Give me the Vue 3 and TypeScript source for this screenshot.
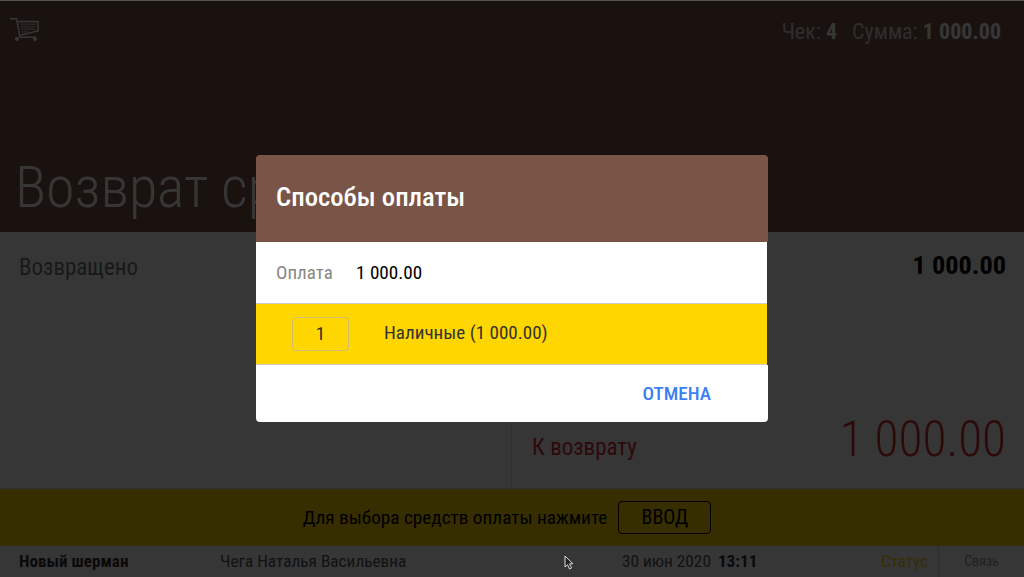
<script setup lang="ts">
const payments = [{ key: 1, label: "Наличные (1 000.00)" }];
</script>

<template>
  <div class="screen">
    <header class="top">
      <div class="top-bar">
        <svg class="cart" width="30" height="24" viewBox="0 0 30 24">
          <path d="M0 .8h6.500l3.500 18.400h16" fill="none" stroke="#fff" stroke-width="1.500" />
          <path d="M8 3.500h20v9.500l-17 4" fill="none" stroke="#fff" stroke-width="1.500" />
          <path d="M10 5.500h16v1.500h-16zM10.500 8h15v1.500h-15zM11 10.500h14v1.500h-14zM11.500 13h7v1.500h-7z" fill="#fff" opacity=".5" />
          <circle cx="7" cy="21" r="2" fill="#fff" />
          <circle cx="25" cy="21" r="2" fill="#fff" />
        </svg>
        <div class="totals">
          <span>Чек: <b>4</b></span>
          <span>Сумма: <b>1 000.00</b></span>
        </div>
      </div>
      <h1 class="title">Возврат средств</h1>
    </header>

    <main class="content">
      <section class="col col-left">
        <div class="returned">Возвращено</div>
      </section>
      <section class="col col-right">
        <div class="sum-top">1 000.00</div>
        <div class="refund">
          <span class="refund-label">К возврату</span>
          <span class="refund-sum">1 000.00</span>
        </div>
      </section>
    </main>

    <div class="prompt">
      <span>Для выбора средств оплаты нажмите</span>
      <span class="key">ВВОД</span>
    </div>

    <footer class="status">
      <b class="shift">Новый шерман</b>
      <span class="cashier">Чега Наталья Васильевна</span>
      <span class="date">30 июн 2020 <b>13:11</b></span>
      <span class="state">Статус</span>
      <span class="link">Связь</span>
    </footer>

    <div class="overlay">
      <div class="dialog">
        <div class="dialog-head">Способы оплаты</div>
        <div class="dialog-sum">
          <span class="sum-label">Оплата</span>
          <span class="sum-value">1 000.00</span>
        </div>
        <div v-for="p in payments" :key="p.key" class="pay-row">
          <span class="pay-key">{{ p.key }}</span>
          <span class="pay-name">{{ p.label }}</span>
        </div>
        <div class="dialog-foot">
          <span class="cancel">ОТМЕНА</span>
        </div>
      </div>
    </div>

    <svg class="pointer" width="12" height="16" viewBox="0 0 12 16">
      <path d="M1 1v11l2.500-2.300 2 4.300 2-1-2-4.200h3.500z" fill="#222" stroke="#ddd" stroke-width="1" />
    </svg>
  </div>
</template>

<style>
html,
body {
  margin: 0;
  background: #000;
}
</style>

<style scoped>
.screen {
  position: relative;
  width: 1024px;
  height: 577px;
  overflow: hidden;
  display: flex;
  flex-direction: column;
  background: #fff;
  font-family: Roboto, "Liberation Sans", sans-serif;
  font-stretch: 75%;
  color: #000;
}
.top {
  height: 232px;
  box-sizing: border-box;
  border-top: 1px solid #555;
  background: #795548;
  color: #fff;
  display: flex;
  flex-direction: column;
  justify-content: space-between;
}
.top-bar {
  display: flex;
  justify-content: space-between;
  align-items: flex-start;
  padding: 17px 23px 0 10px;
}
.totals {
  display: flex;
  gap: 15px;
  font-size: 22px;
  line-height: 28px;
  color: rgba(255, 255, 255, 0.75);
}
.totals b {
  color: #fff;
}
.title {
  margin: 0 0 10px 15px;
  font-size: 58px;
  font-weight: 350;
  line-height: 70px;
}
.content {
  height: 256px;
  display: flex;
  border-bottom: 1px solid #ddd;
}
.col {
  box-sizing: border-box;
}
.col-left {
  width: 511px;
  padding: 22px 19px;
}
.returned {
  font-size: 23px;
  color: #777;
}
.col-right {
  flex: 1;
  display: flex;
  flex-direction: column;
  justify-content: space-between;
  border-left: 1px solid #ddd;
  padding: 18px 18px 21px 20px;
}
.sum-top {
  text-align: right;
  font-size: 26.300px;
  font-weight: 700;
}
.refund {
  display: flex;
  justify-content: space-between;
  align-items: flex-end;
  color: #d32f2f;
}
.refund-label {
  font-size: 23px;
  line-height: 36px;
  margin-bottom: 1px;
}
.refund-sum {
  font-size: 49.200px;
  font-weight: 350;
  line-height: 56px;
}
.prompt {
  height: 57px;
  box-sizing: border-box;
  padding-right: 10px;
  background: #ffd600;
  display: flex;
  align-items: center;
  justify-content: center;
  gap: 11px;
  font-size: 19.250px;
}
.key {
  width: 93px;
  height: 33px;
  box-sizing: border-box;
  border: 1px solid #000;
  border-radius: 4px;
  text-align: center;
  font-size: 20px;
  line-height: 31px;
}
.status {
  flex: 1;
  display: flex;
  align-items: center;
  padding-left: 19px;
  font-size: 17.300px;
  color: #555;
}
.shift {
  width: 201px;
  margin-bottom: 2px;
  font-size: 17.100px;
  color: #333;
}
.cashier {
  width: 402px;
  margin-bottom: 2px;
}
.date {
  width: 259px;
  margin-bottom: 2px;
}
.date b {
  margin-left: 3px;
  color: #333;
}
.state {
  width: 57px;
  margin-bottom: 2px;
  color: #ffd600;
  font-size: 17px;
}
.link {
  flex: 1;
  align-self: stretch;
  border-left: 1px solid #ddd;
  text-align: center;
  font-size: 14px;
  line-height: 31px;
  color: #999;
}
.overlay {
  position: absolute;
  inset: 1px 0 0;
  padding-bottom: 1px;
  box-sizing: border-box;
  background: rgba(0, 0, 0, 0.79);
  display: flex;
  align-items: center;
  justify-content: center;
}
.dialog {
  width: 512px;
  border-radius: 4px;
  overflow: hidden;
}
.dialog-head {
  height: 87px;
  box-sizing: border-box;
  padding-left: 20px;
  background: #795548;
  color: #fff;
  font-size: 26.700px;
  font-weight: 500;
  line-height: 85px;
}
.dialog-sum {
  height: 62px;
  box-sizing: border-box;
  margin-right: 1px;
  display: flex;
  align-items: center;
  padding-left: 20px;
  background: #fff;
  border-bottom: 1px solid #ccc;
}
.sum-label {
  width: 80px;
  font-size: 19px;
  color: #888;
}
.sum-value {
  font-size: 19.200px;
}
.pay-row {
  height: 61px;
  box-sizing: border-box;
  margin-right: 1px;
  display: flex;
  align-items: center;
  padding-left: 36px;
  background: #ffd600;
  border-bottom: 1px solid #ccc;
  color: #333;
  font-size: 19.100px;
}
.pay-key {
  width: 57px;
  height: 34px;
  box-sizing: border-box;
  border: 1px solid #cdbe6a;
  border-radius: 4px;
  text-align: center;
  line-height: 32px;
  margin-right: 35px;
}
.pay-name {
  margin-bottom: 3px;
}
.dialog-foot {
  height: 57px;
  display: flex;
  align-items: center;
  justify-content: flex-end;
  padding-right: 57px;
  background: #fff;
}
.cancel {
  color: #3b7ff0;
  font-size: 19.200px;
  font-weight: 500;
}
.pointer {
  position: absolute;
  left: 564px;
  top: 555px;
}
</style>
